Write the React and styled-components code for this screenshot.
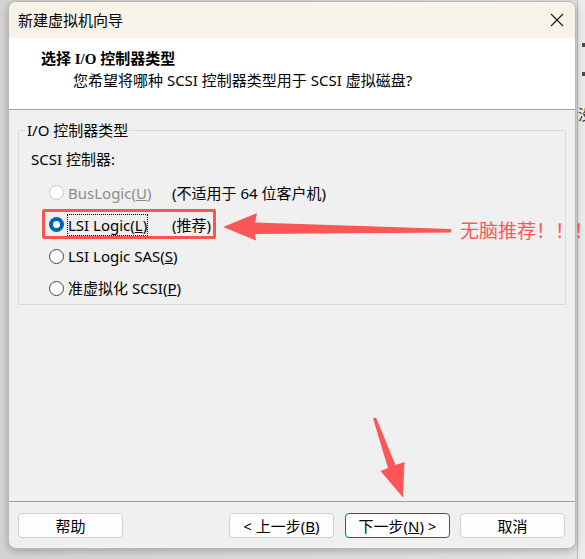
import styled, { createGlobalStyle } from "styled-components";

const GlobalStyle = createGlobalStyle`
  html, body {
    margin: 0;
    padding: 0;
  }
  body {
    font-family: "Noto Sans", "Noto Sans CJK SC", sans-serif;
    font-size: 15px;
    color: #000;
  }
`;

const Page = styled.div`
  position: relative;
  width: 585px;
  height: 559px;
  overflow: hidden;
  background: linear-gradient(90deg, #d4d4d4 0%, #dedede 60%, #e4e4e4 100%);
  padding: 1px 0 0 8px;
  box-sizing: border-box;
`;

const Backdrop = styled.div`
  position: absolute;
  top: 0;
  left: 577px;
  width: 8px;
  height: 559px;
  border-left: 1px solid #b9b9b9;
  background: #ececec;
  font-size: 15px;

  i {
    position: absolute;
    left: 4px;
    width: 4px;
    height: 4px;
    background: #4a4a4a;
  }
  span {
    position: absolute;
    left: 0;
    top: 103px;
    color: #333;
  }
`;

const Window = styled.div`
  position: relative;
  z-index: 1;
  width: 568px;
  height: 548px;
  box-sizing: border-box;
  display: flex;
  flex-direction: column;
  background: #f0f0f0;
  border: 1px solid #b8b8b8;
  border-radius: 8px;
  overflow: hidden;
  box-shadow: 0 2px 8px rgba(0, 0, 0, 0.25);
`;

const TitleBar = styled.div`
  height: 36px;
  flex: none;
  display: flex;
  align-items: center;
  justify-content: space-between;
  padding: 0 11px 0 9px;
  background: #f8f3e9;
  line-height: 20px;
`;

const Header = styled.div`
  height: 72px;
  flex: none;
  box-sizing: border-box;
  background: #fff;
  border-bottom: 1px solid #a0a0a0;
  padding: 11px 0 0 32px;
`;

const HeaderTitle = styled.div`
  font-family: "Liberation Serif", "Noto Sans CJK SC", serif;
  font-weight: bold;
  line-height: 20px;
`;

const HeaderText = styled.div`
  margin: 1px 0 0 32px;
  line-height: 20px;
`;

const Body = styled.div`
  flex: 1;
  padding: 10px 9px 0;
`;

const GroupBox = styled.fieldset`
  margin: 0;
  padding: 9px 0 0 12px;
  border: 1px solid #d9d9d9;
  border-radius: 0;
`;

const Legend = styled.legend`
  margin-left: -6px;
  padding: 0 2px;
  line-height: 20px;
`;

const Caption = styled.div`
  line-height: 20px;
  margin-bottom: 8px;
`;

const OptionList = styled.div`
  padding-left: 18px;
`;

const Option = styled.div`
  position: relative;
  height: 31.8px;
  display: flex;
  align-items: center;
  white-space: nowrap;
  color: ${(p) => (p.disabled ? "#8c8c8c" : "#000")};

  ${(p) =>
    p.highlight &&
    `
    &::after {
      content: "";
      position: absolute;
      left: -7px;
      top: 0;
      width: 168px;
      height: 24px;
      border: 3px solid #fb5252;
      border-radius: 2px;
    }
  `}
`;

const Radio = styled.span`
  width: 15px;
  height: 15px;
  flex: none;
  box-sizing: border-box;
  border-radius: 50%;
  margin-right: 4px;
  border: 1px solid ${(p) => (p.disabled ? "#c6c6c6" : "#444")};
  background: #fff;

  ${(p) =>
    p.checked &&
    `
    border: 4.5px solid #0062b8;
    background: #fff;
  `}
`;

const Label = styled.span`
  min-width: 104px;
  line-height: 20px;
  flex: none;

  & > span {
    outline: ${(p) => (p.focused ? "1px dotted #000" : "none")};
    outline-offset: 0;
  }
`;

const Note = styled.span`
  color: #000;
  line-height: 20px;
`;

const Footer = styled.div`
  flex: none;
  display: flex;
  align-items: center;
  gap: 11px;
  border-top: 1px solid #a0a0a0;
  padding: 11px 10px 10px 9px;
`;

const Spacer = styled.div`
  flex: 1;
`;

const Button = styled.button`
  width: ${(p) => p.width || 105}px;
  height: 25px;
  margin-left: ${(p) => p.shift || 0}px;
  font: inherit;
  line-height: 20px;
  color: #000;
  background: #fdfdfd;
  border: 1px solid ${(p) => (p.primary ? "#0067c0" : "#d0d0d0")};
  border-radius: 4px;
  padding: 0;
`;

const Overlay = styled.svg`
  position: absolute;
  left: 0;
  top: 0;
  z-index: 2;
  pointer-events: none;
`;

const Annotation = styled.div`
  position: absolute;
  left: 460px;
  top: 216px;
  z-index: 2;
  white-space: nowrap;
  font-family: "Noto Sans CJK SC", sans-serif;
  font-size: 19px;
  line-height: 28px;
  color: #fc5656;
`;

function CloseIcon() {
  return (
    <svg width="14" height="14" viewBox="0 0 14 14">
      <path d="M1 1 L13 13 M13 1 L1 13" stroke="#1a1a1a" strokeWidth="1.1" />
    </svg>
  );
}

const options = [
  { label: "BusLogic", key: "U", note: "(不适用于 64 位客户机)", disabled: true },
  { label: "LSI Logic", key: "L", note: "(推荐)", checked: true },
  { label: "LSI Logic SAS", key: "S" },
  { label: "准虚拟化 SCSI", key: "P" },
];

export default function App() {
  return (
    <>
      <GlobalStyle />
      <Page>
        <Backdrop>
          <i style={{ top: 43 }} />
          <i style={{ top: 72 }} />
          <span>没</span>
        </Backdrop>
        <Window>
          <TitleBar>
            <span>新建虚拟机向导</span>
            <CloseIcon />
          </TitleBar>
          <Header>
            <HeaderTitle>选择 I/O 控制器类型</HeaderTitle>
            <HeaderText>您希望将哪种 SCSI 控制器类型用于 SCSI 虚拟磁盘?</HeaderText>
          </Header>
          <Body>
            <GroupBox>
              <Legend>I/O 控制器类型</Legend>
              <Caption>SCSI 控制器:</Caption>
              <OptionList>
                {options.map((o) => (
                  <Option key={o.key} disabled={o.disabled} highlight={o.checked}>
                    <Radio checked={o.checked} disabled={o.disabled} />
                    <Label focused={o.checked}>
                      <span>
                        {o.label}(<u>{o.key}</u>)
                      </span>
                    </Label>
                    {o.note && <Note>{o.note}</Note>}
                  </Option>
                ))}
              </OptionList>
            </GroupBox>
          </Body>
          <Footer>
            <Button>帮助</Button>
            <Spacer />
            <Button>
              &lt; 上一步(<u>B</u>)
            </Button>
            <Button primary>
              下一步(<u>N</u>) &gt;
            </Button>
            <Button shift={-1}>取消</Button>
          </Footer>
        </Window>
        <Overlay width="585" height="559" viewBox="0 0 585 559">
          <polygon
            fill="#fc5656"
            points="223,227 257,213 255,222.5 451,229 451,232.5 255,234 256,240.5"
          />
          <polygon
            fill="#fc5656"
            points="373,418.5 376,417.5 395.5,465 404.5,462 403,497.5 380.5,471 388,468"
          />
        </Overlay>
        <Annotation>无脑推荐！！！</Annotation>
      </Page>
    </>
  );
}
